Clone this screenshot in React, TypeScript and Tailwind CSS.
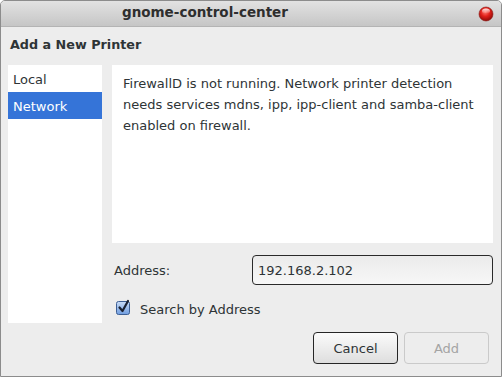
import React from "react";

function CloseButton() {
  return (
    <svg width="16" height="16" viewBox="0 0 16 16">
      <defs>
        <radialGradient id="rg" cx="0.45" cy="0.35" r="0.65">
          <stop offset="0" stopColor="#ff7a6e" />
          <stop offset="0.5" stopColor="#e0201a" />
          <stop offset="1" stopColor="#8e0b08" />
        </radialGradient>
        <linearGradient id="hl" x1="0" y1="0" x2="0" y2="1">
          <stop offset="0" stopColor="#ffffff" stopOpacity="0.9" />
          <stop offset="1" stopColor="#ffffff" stopOpacity="0" />
        </linearGradient>
      </defs>
      <circle cx="8" cy="8" r="7" fill="url(#rg)" stroke="#8a1a14" strokeWidth="0.6" />
      <ellipse cx="8" cy="5" rx="4" ry="2.6" fill="url(#hl)" />
    </svg>
  );
}

function CheckBox() {
  return (
    <svg width="15" height="16" viewBox="0 0 15 16">
      <defs>
        <linearGradient id="cb" x1="0" y1="0" x2="0" y2="1">
          <stop offset="0" stopColor="#c9dcf6" />
          <stop offset="1" stopColor="#6f9de0" />
        </linearGradient>
      </defs>
      <rect x="0.5" y="2.5" width="13" height="13" rx="2" fill="url(#cb)" stroke="#3d5f94" />
      <path d="M3.5 8.5 L6.5 12 L12 2" fill="none" stroke="#1b2233" strokeWidth="2.2" strokeLinecap="round" strokeLinejoin="round" />
    </svg>
  );
}

export default function App() {
  return (
    <div
      className="w-[502px] h-[377px] bg-[#ededed] border border-[#8c8c8c] rounded-t-[5px] flex flex-col text-[13px] text-[#2e3436] overflow-hidden"
      style={{ fontFamily: '"DejaVu Sans", sans-serif' }}
    >
      <div className="h-[26px] shrink-0 relative flex items-center pl-[121px] bg-gradient-to-b from-[#e2e2e2] to-[#c6c6c6] border-b border-[#b4b4b4]">
        <span className="font-bold text-[#2e2e2e] text-[13.5px] leading-none pb-[1px]">gnome-control-center</span>
        <div className="absolute right-[7px] top-[5px]">
          <CloseButton />
        </div>
      </div>
      <div className="h-[38px] shrink-0 pl-[9px] pt-[10px] font-bold text-[12.75px] leading-[15px]">Add a New Printer</div>
      <div className="flex">
        <div className="ml-[7px] w-[94px] h-[258px] bg-white flex flex-col">
          <div className="h-[27px] pl-[5px] pt-[2px] flex items-center">Local</div>
          <div className="h-[27px] pl-[5px] pt-[2px] flex items-center bg-[#3574d8] text-white">Network</div>
        </div>
        <div className="ml-[10px] w-[381px] flex flex-col">
          <div className="h-[178px] bg-white pl-[11px] pr-[8px] pt-[8px] leading-[21px]">
            FirewallD is not running. Network printer detection needs services mdns, ipp, ipp-client and samba-client enabled on firewall.
          </div>
          <div className="mt-[12px] h-[30px] flex items-center">
            <span className="pl-[2px] w-[140px] pt-[2px]">Address:</span>
            <div className="flex-1 h-[30px] rounded-[4px] border border-[#2a2a2a] bg-gradient-to-b from-[#ebebeb] to-[#f7f7f7] flex items-center pl-[5px] pt-[1px]">
              192.168.2.102
            </div>
          </div>
          <div className="mt-[14px] h-[16px] flex items-center pl-[4px]">
            <CheckBox />
            <span className="ml-[9px] mt-[5px]">Search by Address</span>
          </div>
          <div className="mt-[17px] flex justify-end gap-[6px] pr-[4px]">
            <div className="w-[85px] h-[32px] rounded-[4px] border border-[#262626] bg-gradient-to-b from-[#fbfbfb] to-[#dedede] flex items-center justify-center pt-[2px]">
              Cancel
            </div>
            <div className="w-[85px] h-[32px] rounded-[4px] border border-[#cacaca] bg-[#ededed] text-[#a4a4a4] flex items-center justify-center pt-[2px]">
              Add
            </div>
          </div>
        </div>
      </div>
    </div>
  );
}
